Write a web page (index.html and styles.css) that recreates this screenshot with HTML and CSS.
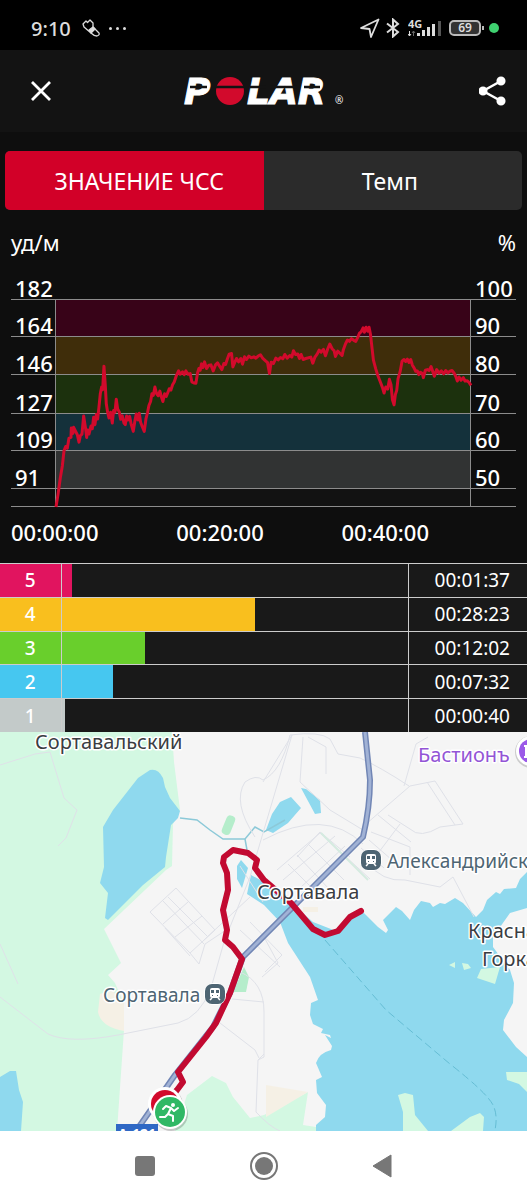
FILE: index.html
```html
<!DOCTYPE html>
<html lang="ru">
<head>
    <meta charset="UTF-8">
    <meta name="viewport" content="width=device-width, initial-scale=1.0">
    <title>Polar</title>
    <link rel="stylesheet" href="styles.css">
</head>
<body>
    <!-- Phone status bar -->
    <div class="status-bar">
        <span class="clock">9:10</span>
        <svg class="shoe" width="20" height="20" viewBox="0 0 20 20" fill="none" stroke="#ddd" stroke-width="1.3" stroke-linejoin="round">
            <path d="M2 6 L5 3 L6.500 4.500 L9 2 L12 5 L12 9 L18 15 Q19 17 16 18 Q13 18 10 15 L3 9 Z"/>
            <path d="M8 12 L12 9 L14 11 L10 15 Z" fill="#ddd"/>
        </svg>
        <span class="dots"><i></i><i></i><i></i></span>
        <span class="spacer"></span>
        <svg width="20" height="20" viewBox="0 0 20 20" fill="none" stroke="#ddd" stroke-width="1.800" stroke-linejoin="round">
            <path d="M1 10 L18.500 1.500 L11 19 L9.500 11 Z"/>
        </svg>
        <svg class="bluetooth" width="14" height="20" viewBox="0 0 14 20" fill="none" stroke="#ddd" stroke-width="2">
            <path d="M1 5.500 L12 14 L7 18.500 V1.500 L12 6 L1 14.500"/>
        </svg>
        <svg class="signal" width="34" height="24" viewBox="0 0 34 24" fill="#ddd">
            <text x="0" y="12" class="net">4G</text>
            <path d="M1.500 15 V20 M0 18 L1.500 20 L3 18" stroke="#ddd" fill="none"/>
            <path d="M5.500 20 V15 M4 17 L5.500 15 L7 17" stroke="#666" fill="none"/>
            <rect x="9" y="17" width="3" height="3"/>
            <rect x="14" y="14" width="3" height="6"/>
            <rect x="19" y="11" width="3" height="9"/>
            <rect x="24" y="8" width="3" height="12"/>
            <rect x="30" y="5" width="3" height="15" fill="#555"/>
        </svg>
        <span class="battery">69</span>
        <span class="live"></span>
    </div>

    <header class="app-bar">
        <button type="button" class="icon-btn" aria-label="Закрыть">
            <svg width="22" height="22" viewBox="0 0 22 22" stroke="#fff" stroke-width="2.800"><path d="M2 2 L20 20 M20 2 L2 20"/></svg>
        </button>
        <svg class="logo" width="168" height="48" viewBox="0 0 168 48" role="img" aria-label="Polar">
            <text x="4" y="37" class="logo-text">P</text>
            <circle cx="50" cy="24" r="14" fill="#d20a2c"/>
            <text x="67" y="37" class="logo-text">LAR</text>
            <path d="M10 20 H27 M36 20 H64 M70 20 H86 M90 20 H117 M124 20 H140" stroke="#131313" stroke-width="2.500"/>
            <text x="155" y="37" class="logo-reg">®</text>
        </svg>
        <button type="button" class="icon-btn share" aria-label="Поделиться">
            <svg width="28" height="30" viewBox="0 0 28 30" fill="#fff" stroke="#fff" stroke-width="2.500">
                <path d="M22 5 L4 15 L22 25" fill="none"/>
                <circle cx="22" cy="5" r="3.300"/><circle cx="4" cy="15" r="3.300"/><circle cx="22" cy="25" r="3.300"/>
            </svg>
        </button>
    </header>

    <main>
        <div class="tabs">
            <button type="button" class="tab active">ЗНАЧЕНИЕ ЧСС</button>
            <button type="button" class="tab">Темп</button>
        </div>

        <div class="units"><span>уд/м</span><span>%</span></div>

        <!-- Heart rate chart: every row ends at a grid line -->
        <div class="chart">
            <div class="row top"><span>182</span><div></div><span>100</span></div>
            <div class="row short"><span>164</span><div class="band z5"></div><span>90</span></div>
            <div class="row"><span>146</span><div class="band z4"></div><span>80</span></div>
            <div class="row tall"><span>127</span><div class="band z3"></div><span>70</span></div>
            <div class="row short"><span>109</span><div class="band z2"></div><span>60</span></div>
            <div class="row"><span>91</span><div class="band z1"></div><span>50</span></div>
            <div class="row low"><span></span><div class="band"></div><span></span></div>
            <svg class="curve" viewBox="168 88 1246 619" preserveAspectRatio="none">
                <polyline vector-effect="non-scaling-stroke" points="168,707 174,670 181,620 187,585 192,540 197,527 202,532 207,502 213,500 214,472 219,488 221,470 227,482 232,492 237,514 241,495 246,490 251,436 257,475 260,500 263,478 267,490 273,466 277,474 281,440 285,462 289,432 293,445 297,410 301,370 305,350 308,358 312,288 316,345 319,400 323,425 327,442 332,425 337,457 341,420 345,425 349,386 353,415 358,424 362,446 367,436 372,457 376,462 380,436 384,448 389,437 394,462 400,482 405,450 409,430 414,448 418,428 422,455 427,468 433,482 438,445 443,425 447,405 452,393 456,370 460,375 465,350 470,370 475,376 480,362 484,378 489,393 494,370 499,378 504,366 508,355 513,359 518,343 523,335 529,317 536,302 541,312 548,305 553,313 558,302 564,312 571,310 576,335 582,338 588,339 593,308 597,295 601,300 605,281 609,292 614,275 620,295 627,285 633,284 640,302 647,284 653,278 659,288 666,298 672,280 677,283 683,265 688,252 695,250 699,290 705,276 710,265 716,275 723,265 728,282 734,260 740,268 747,258 754,263 762,260 768,264 776,257 782,254 789,265 798,273 803,277 809,310 814,276 821,280 828,264 835,269 842,262 849,266 855,253 862,264 870,256 876,261 881,242 887,253 894,252 899,265 904,253 910,268 918,265 926,263 933,261 939,279 945,262 952,252 958,240 964,246 971,238 977,257 984,236 990,222 997,236 1003,242 1007,259 1014,243 1021,250 1027,256 1031,238 1037,222 1043,210 1049,214 1055,206 1062,211 1068,214 1074,202 1079,190 1084,186 1090,174 1094,187 1099,172 1104,184 1108,172 1112,192 1117,235 1121,270 1128,296 1134,315 1141,333 1148,351 1153,368 1158,350 1164,356 1169,327 1174,344 1178,387 1183,403 1187,372 1191,360 1195,325 1201,305 1207,273 1213,268 1218,274 1223,267 1228,277 1233,268 1238,285 1243,293 1248,303 1253,302 1257,313 1262,306 1268,310 1271,322 1277,300 1283,298 1288,301 1294,289 1300,306 1304,318 1311,298 1318,309 1325,302 1332,311 1338,301 1345,308 1352,302 1357,301 1363,308 1368,318 1373,332 1378,320 1384,330 1391,322 1396,332 1402,331 1408,336 1414,345"/>
            </svg>
        </div>
        <div class="time-axis"><span>00:00:00</span><span>00:20:00</span><span>00:40:00</span></div>

        <table class="zones">
            <tr class="zone5"><th scope="row">5</th><td><div class="bar" style="width: 3%"></div></td><td class="time">00:01:37</td></tr>
            <tr class="zone4"><th scope="row">4</th><td><div class="bar" style="width: 56%"></div></td><td class="time">00:28:23</td></tr>
            <tr class="zone3"><th scope="row">3</th><td><div class="bar" style="width: 24%"></div></td><td class="time">00:12:02</td></tr>
            <tr class="zone2"><th scope="row">2</th><td><div class="bar" style="width: 15%"></div></td><td class="time">00:07:32</td></tr>
            <tr class="zone1"><th scope="row">1</th><td><div class="bar" style="width: 1%"></div></td><td class="time">00:00:40</td></tr>
        </table>
    </main>

    <!-- Route map -->
    <div class="map">
        <svg viewBox="0 0 527 399" preserveAspectRatio="xMidYMid slice">
            <rect width="527" height="399" fill="#f5f5f5"/>
            <g fill="#d3f8e2">
                <path d="M0 0 H172 L174 30 L180 78 L173 92 L172 134 L166 138 L104 197 L121 231 L108 243 L115 251 L124 272 V298 L117 399 H0 Z"/>
                <path d="M175 399 L187 363 L212 344 L226 351 L233 365 L250 386 L264 383 L308 360 L303 393 L316 395 V399 Z"/>
            </g>
            <path d="M100 262 L98 280 Q101 295 124 299 V270 L112 258 Z M266 353 L308 360 L266 385 Z M303 175 h15 v5 h-15 Z" fill="#f5f0e5"/>
            <path d="M244 235 L249 245 L246 260 H233 Z" fill="#b5edcb"/>
            <rect x="224" y="83" width="9" height="20" rx="4" fill="#b5edcb" transform="rotate(22 228 93)"/>

            <g fill="#8fd9ee">
                <path d="M150 38 Q158 36 163 46 L165 55 L170 66 L180 79 L178 86 L171 93 L166 125 L165 135 L143 153 L108 188 L105 186 L108 161 L100 151 L104 135 L103 95 L113 78 L138 46 Z"/>
                <path d="M0 345 L10 339 H16 L19 358 L23 370 L21 399 H0 Z"/>
                <path d="M266 98 L272 82 L280 70 L291 65 L301 76 L288 91 L273 101 Z M301 56 L306 57 L320 68 L321 81 L315 82 Z"/>
                <path d="M241 128 L248 136 L242 156 L237 147 V134 Z"/>
                <path d="M251 143 L264 150 L291 171 L313 190 L336 199 L350 186 L363 180 L378 195 L386 201 L388 198 L383 188 L396 175 L402 179 L410 188 L414 178 L421 169 L430 171 L433 175 L440 171 L445 172 L455 166 L463 171 L476 185 L483 178 L487 168 L496 160 L500 162 L504 157 L516 156 L520 147 L527 140 V176 L510 181 L493 205 V215 L510 238 L514 251 L513 271 L504 288 L503 298 L516 315 L527 325 V399 H316 V393 L325 385 L326 373 L317 361 L316 348 L322 345 L316 331 Q319 321 331 318 L332 314 L325 303 L331 306 L330 303 L321 301 L323 297 L313 292 L310 283 L311 271 L318 268 L310 245 L299 228 L288 211 L280 190 L264 173 L247 162 Z"/>
            </g>
            <g fill="#d3f8e2">
                <path d="M398 363 L405 361 L413 363 L415 383 L428 399 H403 V380 Z M451 399 L470 385 L480 381 L484 385 L483 399 Z M506 340 L527 340 V360 L519 352 L507 348 Z M477 246 L481 237 L500 235 L495 252 Z M449 233 l6 -3 v6 Z M462 231 l6 1 3 4 -7 2 Z"/>
            </g>

            <!-- River and ferry line -->
            <path d="M180 86 L197 88 L210 98 L223 107 H245 L255 95 L264 100 L285 88 M245 107 L247 118" fill="none" stroke="#8cc9d8" stroke-width="1.500"/>
            <path d="M325 208 L386 278 L450 332 Q487 361 493 373 Q498 383 495 398" fill="none" stroke="#65bdd4" stroke-dasharray="8 4"/>

            <!-- Small streets -->
            <g fill="none" stroke="#dfe1e8">
                <path d="M0 33 L35 22 L50 20 L64 66 L77 78 L66 106 L58 114 M0 265 L48 302 Q70 312 118 303 L178 291 Q200 285 211 256 L224 210 L250 145 L292 3 L263 50"/>
                <path d="M255 105 Q232 70 245 50 Q256 42 263 48 Q281 40 290 3 Q320 -1 330 7 L338 22 L360 26 Q380 35 409 54 M303 5 L300 50 L330 78 L363 98 M308 5 L326 15 V42"/>
                <path d="M263 108 Q325 75 363 112 M263 170 L240 134 M366 92 L410 54 L435 49 L463 92 L440 95 Q420 107 410 97 L388 83 M427 50 L455 93 M371 100 L410 115 V143 M367 130 Q382 150 405 148 L440 155 L453 145 L474 185 M404 54 L416 12 L428 5"/>
                <path d="M297 125 L320 100 L350 125 M277 138 L320 101 L370 147 M283 148 L335 104 M300 156 L345 114 M297 123 L330 158 M309 113 L344 148 M288 132 L318 162 M378 83 L411 110 M376 124 L400 92 M361 116 L384 136 M369 108 L392 128"/>
                <path d="M150 180 L176 156 L215 198 L190 221 Z M163 169 L204 212 M168 165 L208 205 M163 192 L188 170 M175 205 L202 184 M190 221 L199 232 L205 212 L226 198 M204 208 L250 165 M165 196 L190 224"/>
                <path d="M240 198 L280 235 M250 190 L282 223 L265 240 M264 205 L278 231 L262 245 M240 240 Q264 250 264 280 V325 L258 328 L256 380 Q270 395 280 399 M220 291 L255 318 L259 326 M232 267 L264 270 M258 328 L264 322 M0 212 L18 252"/>
            </g>
            <path d="M321 101 L368 148" stroke="#d5ebe0" stroke-width="2"/>

            <!-- Highway -->
            <g fill="none" stroke-linejoin="round">
                <path d="M365 0 L370 48 Q370 75 363 105 L313 155 L243 225 L230 261 L213 295 L175 343 L136 399" stroke="#7186b5" stroke-width="6"/>
                <path d="M365 0 L370 48 Q370 75 363 105 L313 155 L243 225 L230 261 L213 295 L175 343 L136 399" stroke="#a1b2d5" stroke-width="3"/>
            </g>

            <polyline class="track" points="361,179 350,185 338,199 325,203 313,197 291,171 264,148 255,136 257,128 248,121 233,118 224,125 223,131 227,141 228,158 223,178 227,198 225,208 233,215 242,227 230,261 216,291 206,305 178,340 183,350 177,358 165,372"/>

            <g class="label">
                <text x="35" y="17" class="city">Сортавальский</text>
                <text x="257" y="167" class="city">Сортавала</text>
                <text x="468" y="206" class="city">Красная</text>
                <text x="482" y="234" class="city">Горка</text>
                <text x="418" y="30" class="place">Бастионъ</text>
                <text x="387" y="136" class="station">Александрийская</text>
                <text x="103" y="270" class="station">Сортавала</text>
            </g>

            <!-- Station icons -->
            <g id="train" transform="translate(371 128)">
                <rect x="-11" y="-11" width="22" height="22" rx="9" fill="#fff"/>
                <rect x="-10" y="-10" width="20" height="20" rx="7" fill="#4e6573"/>
                <rect x="-5" y="-6" width="10" height="10" rx="2" fill="#fff"/>
                <path d="M-4 -4 h3 v3 h-3 Z M1 -4 h3 v3 h-3 Z M-3 1 h1 v1 h-1 Z M2 1 h1 v1 h-1 Z" fill="#4e6573"/>
                <path d="M-3 4 L-5 6 M3 4 L5 6" stroke="#fff" stroke-width="1.500"/>
            </g>
            <use href="#train" x="-156" y="134"/>

            <circle cx="531" cy="20" r="16" fill="#ccc"/>
            <circle cx="531" cy="19" r="15" fill="#fff"/>
            <circle cx="531" cy="19" r="12" fill="#9b59e8"/>
            <path d="M524 14 h5 M526 14 v11 M524 25 h5" stroke="#fff" stroke-width="2"/>

            <!-- Road number plate, finish and start markers -->
            <rect x="116" y="392" width="42" height="18" fill="#2f68c5"/>
            <text x="137" y="407" text-anchor="middle" class="road">А-121</text>
            <circle cx="166" cy="373" r="17" fill="#00000030"/>
            <circle cx="165" cy="372" r="17" fill="#fff"/>
            <circle cx="165" cy="372" r="14" fill="#d20a2c"/>
            <circle cx="171" cy="382" r="17" fill="#00000030"/>
            <circle cx="170" cy="380" r="17" fill="#fff"/>
            <circle cx="170" cy="380" r="15" fill="#30b865"/>
            <circle cx="173" cy="373" r="2" fill="#fff"/>
            <path d="M163 377 L166 374 L171 376 L174 379 L178 376 M171 376 L168 382 L173 384 L173 389 M168 382 L165 385 L160 385" fill="none" stroke="#fff" stroke-width="2" stroke-linejoin="round" stroke-linecap="round"/>
        </svg>
    </div>

    <nav class="nav-bar">
        <button type="button" aria-label="Недавние"><svg width="30" height="30" viewBox="0 0 30 30"><rect x="5" y="5" width="20" height="20" rx="3" fill="#777"/></svg></button>
        <button type="button" aria-label="Домой"><svg width="30" height="30" viewBox="0 0 30 30"><circle cx="15" cy="15" r="13" fill="none" stroke="#777" stroke-width="2"/><circle cx="15" cy="15" r="9" fill="#777"/></svg></button>
        <button type="button" aria-label="Назад"><svg width="30" height="30" viewBox="0 0 30 30"><path d="M5 15 L23 4 V26 Z" fill="#777" stroke="#777" stroke-linejoin="round"/></svg></button>
    </nav>
</body>
</html>
```
FILE: styles.css
```css
* {
    box-sizing: border-box;
}
body {
    margin: 0;
    min-height: 100vh;
    display: flex;
    flex-direction: column;
    background-color: #0e0e0e;
    color: #fff;
    font-family: "Noto Sans", sans-serif;
}
button {
    border: 0;
    padding: 0;
    background: none;
    color: inherit;
    font-family: inherit;
    cursor: pointer;
}
svg {
    display: block;
}

/* Status bar */
.status-bar {
    height: 50px;
    padding: 6px 28px 0 31px;
    display: flex;
    align-items: center;
    background-color: #000;
    color: #ddd;
}
.clock {
    font-size: 20px;
    font-weight: 500;
    width: 50px;
}
.dots {
    display: flex;
    gap: 4px;
    margin-left: 8px;
}
.dots i {
    width: 3px;
    height: 3px;
    border-radius: 50%;
    background-color: #ddd;
}
.spacer {
    flex: 1;
}
.bluetooth {
    margin-left: 6px;
}
.signal {
    margin-left: 8px;
}
.net {
    font-size: 11px;
    font-weight: 700;
}
.battery {
    position: relative;
    width: 32px;
    height: 16px;
    margin-left: 7px;
    border: 2px solid #bbb;
    border-radius: 5px;
    background-color: #333;
    font-size: 12px;
    font-weight: 600;
    line-height: 12px;
    text-align: center;
}
.battery::after {
    content: "";
    position: absolute;
    right: -5px;
    top: 4px;
    width: 2px;
    height: 4px;
    background-color: #bbb;
}
.live {
    width: 10px;
    height: 10px;
    margin-left: 8px;
    border-radius: 50%;
    background-color: #3fd070;
}

/* App bar */
.app-bar {
    height: 82px;
    padding: 0 20px;
    display: flex;
    align-items: center;
    justify-content: space-between;
    background-color: #131313;
}
.icon-btn {
    width: 42px;
    height: 42px;
    display: flex;
    align-items: center;
    justify-content: center;
}
.icon-btn.share {
    justify-content: flex-end;
}
.logo-text {
    font-family: "DejaVu Sans", sans-serif;
    font-size: 36px;
    font-weight: 700;
    font-style: oblique;
    fill: #fff;
    stroke: #fff;
    stroke-width: 1px;
}
.logo-reg {
    font-size: 10px;
    fill: #fff;
}

/* Tabs */
.tabs {
    display: flex;
    height: 59px;
    margin: 19px 5px 0;
    border-radius: 5px;
    overflow: hidden;
    background-color: #2b2b2b;
}
.tab {
    width: 50%;
    padding-right: 6px;
    font-size: 23px;
}
.tab.active {
    padding: 0 0 0 10px;
    background-color: #d20028;
}
.units {
    display: flex;
    justify-content: space-between;
    padding: 16px 11px 0;
    font-size: 22px;
    line-height: 32px;
}

/* Chart */
.chart {
    position: relative;
    margin: 12px 11px 0;
    font-size: 22px;
    font-weight: 500;
}
.row {
    height: 38px;
    display: grid;
    grid-template-columns: 44px 1fr 45px;
    border-bottom: 1px solid #8c8c8c;
}
.row span {
    align-self: end;
    line-height: 22px;
    padding-left: 4px;
}
.row.top {
    height: 30px;
}
.row.short {
    height: 37px;
}
.row.tall {
    height: 39px;
}
.row.low {
    height: 18px;
}
.band {
    border-left: 1px solid #8c8c8c;
    border-right: 1px solid #8c8c8c;
    background-color: #121212;
}
.z5 { background-color: #380318; }
.z4 { background-color: #3f2d0a; }
.z3 { background-color: #1c310d; }
.z2 { background-color: #14313b; }
.z1 { background-color: #313333; }
.curve {
    position: absolute;
    left: 45px;
    top: 29px;
    width: calc(100% - 90px);
    height: calc(100% - 29px);
    overflow: visible;
}
.curve polyline {
    fill: none;
    stroke: #d20a2c;
    stroke-width: 3px;
    stroke-linejoin: round;
}
.time-axis {
    display: flex;
    justify-content: space-between;
    padding: 9px 98px 15px 11px;
    font-size: 22px;
    font-weight: 500;
    line-height: 32px;
}

/* Heart rate zones */
.zones {
    width: 100%;
    height: 169px;
    border-collapse: collapse;
    table-layout: fixed;
    background-color: #191919;
}
.zones tr {
    border-top: 1px solid #ccc;
}
.zones th,
.zones td {
    padding: 0;
    height: 32px;
}
.zones th {
    width: 61px;
    border-right: 1px solid #ccc;
    font-size: 19px;
    font-weight: 500;
    line-height: 32px;
}
.zones .time {
    width: 119px;
    padding-right: 17px;
    border-left: 1px solid #ccc;
    font-size: 19px;
    line-height: 32px;
    text-align: right;
}
.bar {
    height: 100%;
}
.zone5 th, .zone5 .bar { background-color: #e1145f; }
.zone4 th, .zone4 .bar { background-color: #f9bf1e; }
.zone3 th, .zone3 .bar { background-color: #69cf2c; }
.zone2 th, .zone2 .bar { background-color: #46c7f0; }
.zone1 th, .zone1 .bar { background-color: #c3cac9; }

/* Map */
.map {
    flex: 1 0 0;
    min-height: 300px;
    display: flex;
    overflow: hidden;
}
.map svg {
    width: 100%;
    height: auto;
}
.track {
    fill: none;
    stroke: #c20a31;
    stroke-width: 6px;
    stroke-linejoin: round;
    stroke-linecap: round;
}
.label text {
    paint-order: stroke;
    stroke: #fff;
    stroke-width: 3px;
    stroke-linejoin: round;
}
.city {
    font-size: 20px;
    fill: #3a3d42;
}
.station {
    font-size: 19px;
    fill: #4e6573;
}
.place {
    font-size: 20px;
    fill: #9355d6;
}
.road {
    font-size: 14px;
    font-weight: 700;
    fill: #fff;
}

/* System navigation */
.nav-bar {
    height: 69px;
    display: flex;
    align-items: center;
    justify-content: center;
    gap: 89px;
    background-color: #fff;
}
```
